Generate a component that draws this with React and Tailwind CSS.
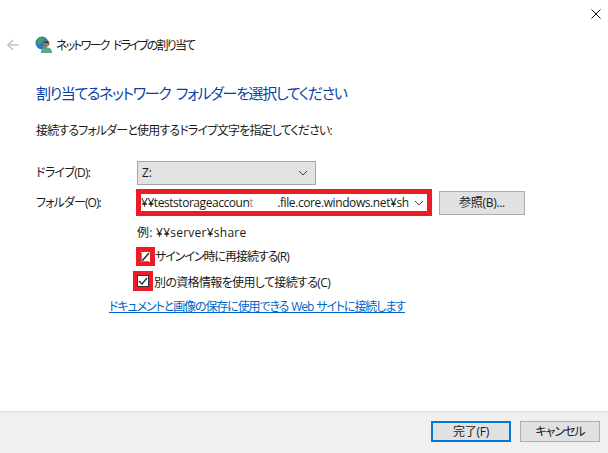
export default function App() {
  return (
    <div className="w-[608px] h-[453px] bg-white flex flex-col overflow-hidden text-[12px] leading-[16px] text-[#1a1a1a] [font-family:'Open_Sans','Noto_Sans_CJK_JP',sans-serif] [font-feature-settings:'palt']">
      <div className="flex-1 flex flex-col min-h-0">
        <div className="h-[36px] flex justify-end items-start pt-[9px] pr-[7px]">
          <svg width="10" height="10" viewBox="0 0 10 10"><path d="M0.5 0.5L9.5 9.5M9.5 0.5L0.5 9.5" stroke="#111" strokeWidth="1" fill="none" /></svg>
        </div>
        <div className="h-[17px] flex items-center pl-[7px]">
          <svg width="12" height="12" viewBox="0 0 12 12"><path d="M6 1L1 6L6 11M1 6H12" stroke="#c4c4c4" strokeWidth="1.6" fill="none" /></svg>
          <svg className="ml-[16px]" width="17" height="17" viewBox="0 0 17 17">
            <circle cx="7" cy="7" r="6.5" fill="#2a78c8" />
            <path d="M3 3C5 1 8 2 9 3C9 5 7 5 6 7C6 9 4 9 3 8C2 6 2 5 3 3Z" fill="#3fa84a" />
            <path d="M8 10C9 9 11 10 10 12L8 13Z" fill="#3fa84a" />
            <path d="M6 17C6 13 8 11.5 11.5 11.5C15 11.5 17 13 17 17Z" fill="#5aa98c" />
            <circle cx="11.5" cy="7.5" r="3" fill="#a57a58" />
            <path d="M9 7C9.5 4.5 13.5 4.5 14 7Z" fill="#3a2a1c" />
          </svg>
          <span className="ml-[4px] tracking-[-1.8px] [word-spacing:3px] relative top-[1px]">ネットワーク ドライブの割り当て</span>
        </div>
        <h1 className="ml-[36px] mt-[29px] text-[15px] leading-[22px] font-normal text-[#0a3fa8] tracking-[-1.33px] [word-spacing:3px]">割り当てるネットワーク フォルダーを選択してください</h1>
        <p className="ml-[36px] mt-[19px] leading-[16px] tracking-[-0.85px]">接続するフォルダーと使用するドライブ文字を指定してください:</p>

        <div className="mt-[22px] flex items-center h-[24px]">
          <span className="ml-[36px] w-[101px] tracking-[-0.7px]">ドライブ(D):</span>
          <div className="w-[179px] h-[24px] bg-[#e2e2e2] border border-[#a6a6a6] flex items-center justify-between pl-[4px] pr-[7px]">
            <span>Z:</span>
            <svg width="10" height="6" viewBox="0 0 10 6"><path d="M1 1L5 5L9 1" stroke="#444" strokeWidth="1" fill="none" /></svg>
          </div>
        </div>

        <div className="mt-[4px] flex items-center h-[27px]">
          <span className="ml-[36px] w-[100px] tracking-[-0.9px]">フォルダー(O):</span>
          <div className="w-[296px] h-[27px] border-[5px] border-[#ed1c24] bg-white flex items-center justify-between pr-[3px]">
            <span className="whitespace-nowrap tracking-[-0.45px]">¥¥teststorageaccoun<span className="text-[#999]">t</span><span className="inline-block w-[24px]"></span><span className="tracking-[-0.4px]">.file.core.windows.net¥sh</span></span>
            <svg width="10" height="6" viewBox="0 0 10 6"><path d="M1 1L5 5L9 1" stroke="#444" strokeWidth="1" fill="none" /></svg>
          </div>
          <div className="ml-[7px] w-[86px] h-[24px] bg-[#e1e1e1] border border-[#adadad] flex items-center justify-center tracking-[-0.3px]">参照(B)...</div>
        </div>

        <div className="ml-[137px] mt-[9px] h-[16px] tracking-[0.25px]">例: ¥¥server¥share</div>

        <div className="ml-[136px] mt-[6px] flex items-center h-[19px]">
          <div className="w-[19px] h-[19px] bg-[#ed1c24] flex items-center justify-center">
            <div className="w-[9px] h-[10px] bg-white flex items-center justify-center">
              <svg width="9" height="10" viewBox="0 0 9 10"><path d="M1 9L8 1" stroke="#333" strokeWidth="1.6" fill="none" /><path d="M0.5 1V9.5H8" stroke="#888" strokeWidth="1" fill="none" /></svg>
            </div>
          </div>
          <span className="tracking-[-1.05px]">サインイン時に再接続する(R)</span>
        </div>

        <div className="ml-[133px] mt-[5px] flex items-start h-[22px]">
          <div className="w-[20px] h-[20px] bg-[#ed1c24] flex items-center justify-center">
            <div className="w-[12px] h-[12px] bg-white border border-[#333] flex items-center justify-center">
              <svg width="10" height="10" viewBox="0 0 10 10"><path d="M1 5L4 8L9 2" stroke="#333" strokeWidth="1.5" fill="none" /></svg>
            </div>
          </div>
          <span className="ml-[1px] mt-[4px] tracking-[-0.65px]">別の資格情報を使用して接続する(C)</span>
        </div>

        <a className="ml-[109px] mt-[6px] text-[#0066cc] underline whitespace-nowrap tracking-[-1.1px] [word-spacing:1px]">ドキュメントと画像の保存に使用できる Web サイトに接続します</a>
      </div>
      <div className="h-[42px] bg-[#f0f0f0] border-t border-[#dfdfdf] flex items-start justify-end pt-[9px] pr-[8px] gap-[9px]">
        <div className="w-[80px] h-[21px] bg-[#e1e1e1] border-2 border-[#0078d7] flex items-center justify-center tracking-[-0.3px]">完了(F)</div>
        <div className="w-[80px] h-[21px] bg-[#e1e1e1] border border-[#adadad] flex items-center justify-center tracking-[-1px]">キャンセル</div>
      </div>
    </div>
  );
}
